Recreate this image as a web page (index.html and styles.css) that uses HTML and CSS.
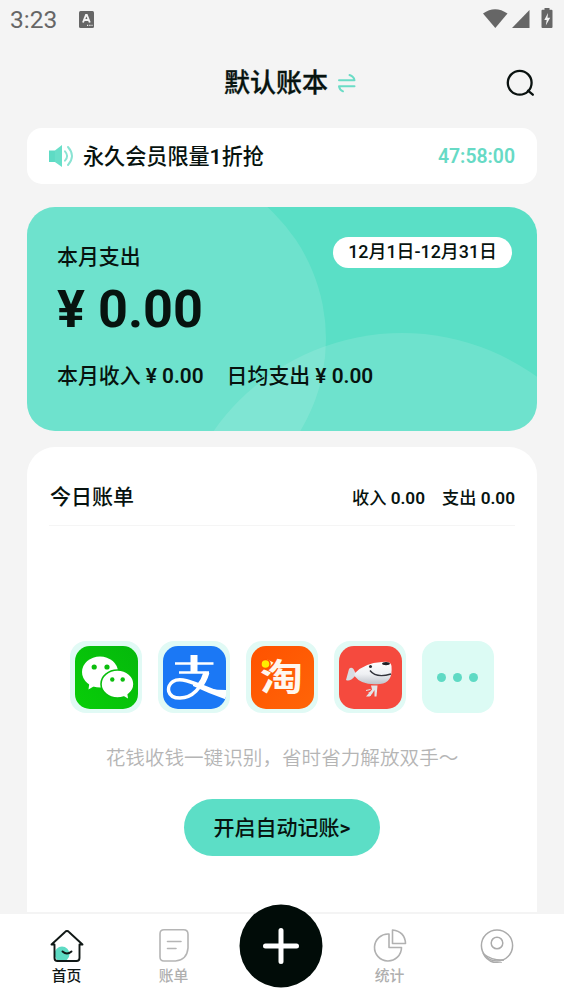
FILE: index.html
```html
<!DOCTYPE html>
<html lang="zh-CN">
<head>
<meta charset="utf-8">
<title>默认账本</title>
<link rel="stylesheet" href="styles.css">
</head>
<body>
<div class="app">
  <div class="status">
    <span class="clock">3:23</span>
    <svg class="status-badge" width="15" height="17" viewBox="0 0 15 17"><rect width="15" height="17" rx="1.5" fill="#666"/><path d="M4 11.5 7 4h.8l3 7.5M5.3 9h4.2" fill="none" stroke="#f4f4f4" stroke-width="1.9"/><path d="M8 14.4h1.2M10.3 14.4h1.2M12.5 14.4h1" stroke="#f4f4f4" stroke-width="1.3"/></svg>
    <svg class="status-icons" width="72" height="22" viewBox="0 0 72 22"><g fill="#666"><path d="M1 5.5Q13 -3 25.5 5.5L13.3 20Z"/><path d="M47.5 2V20H30Z"/><path d="M62.500 0h5v1.800h2a1 1 0 0 1 1 1V19a1 1 0 0 1-1 1h-9a1 1 0 0 1-1-1V2.800a1 1 0 0 1 1-1h2Z"/></g><path d="M66 5 62.300 12h2.400l-.9 5.500 4.400-7.700h-2.700Z" fill="#f4f4f4"/></svg>
  </div>

  <header class="header">
    <h1 class="title">默认账本</h1>
    <svg class="swap" width="20" height="22" viewBox="0 0 20 22" fill="none" stroke="#6bdcc6" stroke-width="2" stroke-linecap="round" stroke-linejoin="round"><path d="M2 8.300H17.500Q17 4.500 12.500 3"/><path d="M17.500 14.300H2Q2.500 17.700 6 19.300"/></svg>
    <svg class="search" width="30" height="30" viewBox="0 0 30 30" fill="none" stroke="#0a1210" stroke-width="2.300" stroke-linecap="round"><circle cx="14.700" cy="14.800" r="11.900"/><path d="m23 22.700 4.800 4"/></svg>
  </header>

  <section class="notice">
    <svg class="speaker" width="26" height="24" viewBox="0 0 26 24"><path d="M1 6.500h6V18H1Z" fill="#5edbc4"/><path d="M6.900 6.500 14 1v22L6.900 18Z" fill="#69dfc9"/><path d="M17 7.300q4.200 4.700 0 9.400M20 3q8 9 0 18" fill="none" stroke="#8ae3d3" stroke-width="1.900" stroke-linecap="round"/></svg>
    <span class="notice-text">永久会员限量<b>1</b>折抢</span>
    <span class="countdown">47:58:00</span>
  </section>

  <section class="summary">
    <svg class="summary-art" width="510" height="224" viewBox="0 0 510 224" fill="#fff"><circle cx="121" cy="132" r="178" fill-opacity=".12"/><circle cx="375" cy="356" r="230" fill-opacity=".12"/></svg>
    <div class="summary-top"><span>本月支出</span><span class="range">12月1日-12月31日</span></div>
    <div class="amount">¥ 0.00</div>
    <div class="summary-foot"><span>本月收入 <b>¥ 0.00</b></span><span>日均支出 <b>¥ 0.00</b></span></div>
  </section>

  <section class="today">
    <div class="today-head">
      <h2>今日账单</h2>
      <div class="totals"><span>收入 <b>0.00</b></span><span>支出 <b>0.00</b></span></div>
    </div>
    <div class="apps">
      <div class="plate"><svg class="logo" viewBox="0 0 63 63"><defs><linearGradient id="wx" x1="1" y1="0" x2="0" y2="1"><stop stop-color="#05b80c"/><stop offset="1" stop-color="#08ce08"/></linearGradient></defs><rect width="63" height="63" fill="url(#wx)"/><g fill="#fff"><path d="m14.500 36-1 7.500L21 39Z"/><ellipse cx="25" cy="26" rx="18" ry="15.500"/><ellipse cx="42.500" cy="38" rx="16.500" ry="14" stroke="#08be0b" stroke-width="1.600"/><path d="m47 49 6 3.500-1-7Z"/></g><g fill="#0bbd0d"><circle cx="19.200" cy="21" r="2.600"/><circle cx="32" cy="21" r="2.600"/><circle cx="37.300" cy="33.500" r="2.200"/><circle cx="47.700" cy="33.500" r="2.200"/></g></svg></div>
      <div class="plate"><svg class="logo" viewBox="0 0 63 63"><rect width="63" height="63" fill="#1b78f5"/><g fill="none" stroke="#fff"><path d="M31 9V27" stroke-width="7"/><path d="M12 17.500H50.500M16 26.500H46" stroke-width="2.600"/><path d="M43.500 26C39 42 29 52 17 52C3.500 52 3 40 10 35.500C20 29.500 38 41 65 50" stroke-width="3.500"/><path d="M43.500 26.500Q41 35 36 41" stroke-width="6"/></g><path d="M30 38.500Q47 44 63 44V53.500Q47 48 30 40Z" fill="#fff"/></svg></div>
      <div class="plate"><svg class="logo" viewBox="0 0 63 63"><defs><linearGradient id="tb" x2="1" y2="1"><stop stop-color="#ff5200"/><stop offset="1" stop-color="#ff6508"/></linearGradient></defs><rect width="63" height="63" fill="url(#tb)"/><text class="tao" transform="translate(9 45) scale(1.16 1)">淘</text><circle cx="14.500" cy="18" r="5.300" fill="#ff5200"/><circle cx="14.500" cy="18" r="3.800" fill="#ffec00"/></svg></div>
      <div class="plate"><svg class="logo" viewBox="0 0 63 63"><defs><linearGradient id="jd" x2="0" y2="1"><stop stop-color="#fff"/><stop offset=".55" stop-color="#eef0f3"/><stop offset="1" stop-color="#bfc3ca"/></linearGradient></defs><rect width="63" height="63" fill="#f54a3e"/><path d="M17 28 14.500 23Q12 20.500 10 23L7 34Q11 36 16 30Z" fill="#d9dce1"/><path d="M15.500 27.500Q25 17 43 16Q52 14.500 52.500 20Q54 37 41 38Q23 40 15.500 30Z" fill="url(#jd)"/><path d="M32 39.500h6.500l-1 11h-2V44l-2.500 4-2.500 2.500H27l6-7Z" fill="#e3e5e8"/><path d="M31.500 43.500 27 44.500M30 46l1.500 4" stroke="#e3e5e8"/><circle cx="31.500" cy="20.500" r="1.500" fill="#292b32"/><ellipse cx="47" cy="17.600" rx="3.900" ry="1.700" fill="#202126"/><path d="M31 24.500Q37 32.500 52 28" fill="none" stroke="#32343b" stroke-width="1.400"/></svg></div>
      <div class="plate more"><i></i><i></i><i></i></div>
    </div>
    <p class="hint">花钱收钱一键识别，省时省力解放双手～</p>
    <button class="start">开启自动记账<b>&gt;</b></button>
  </section>

  <nav class="tabs">
    <div class="tab active"><svg width="36" height="36" viewBox="0 0 36 36" fill="none" stroke="#101816" stroke-width="1.900" stroke-linecap="round" stroke-linejoin="round"><circle cx="13" cy="27" r="7.500" fill="#5edbc4" stroke="none"/><path d="M5.500 17.500H2.500L15.800 5.200Q18 3 20.200 5.200L33.500 17.500H30.500V31Q30.500 34 27.500 34H8.500Q5.500 34 5.500 31Z"/><path d="M13.500 24.500Q18 28.500 22.500 24.500"/></svg><span>首页</span></div>
    <div class="tab"><svg width="36" height="36" viewBox="0 0 36 36" fill="none" stroke="#b5b5b5" stroke-width="1.600" stroke-linecap="round"><path d="M8 2.800H27.500Q32 2.800 32 7.300V21Q31 33 19.500 34H8Q4 34 4 30V6.800Q4 2.800 8 2.800Z"/><path d="M11.500 14.500H25M11.500 21.500H20"/></svg><span>账单</span></div>
    <div class="tab fab"><svg width="84" height="84" viewBox="0 0 84 84"><circle cx="42" cy="42" r="41.500" fill="#010c08"/><path d="M42 26.500V57.500M26.500 42H57.500" stroke="#fff" stroke-width="5" stroke-linecap="round"/></svg></div>
    <div class="tab"><svg width="36" height="36" viewBox="0 0 36 36" fill="none" stroke="#b1b1b1" stroke-width="1.600" stroke-linejoin="round"><path d="M17 7A13.500 13.500 0 1 0 29.500 20.500H17Z"/><path d="M20.500 3.500V16.500H33.500Q33 4.500 20.500 3Z"/></svg><span>统计</span></div>
    <div class="tab"><svg width="36" height="36" viewBox="0 0 36 36" fill="none" stroke="#ababab" stroke-width="1.500"><circle cx="18" cy="18.500" r="15.600"/><circle cx="18" cy="16" r="5.800"/><path d="M4.500 27Q14 34 25 33M4 26Q9 37 23 36"/></svg><span></span></div>
  </nav>
</div>
</body>
</html>
```
FILE: styles.css
```css
* { box-sizing: border-box; }
body {
  margin: 0;
  background: #f4f4f4;
  color: #07130f;
  font-family: Roboto, "Noto Sans CJK SC", sans-serif;
  font-weight: 500;
}
svg { display: block; flex: none; }
h1, h2, p { margin: 0; font-weight: 500; }
b { font-weight: 600; }
.app { display: flex; flex-direction: column; width: 564px; height: 1004px; overflow: hidden; }
.status { display: flex; align-items: center; height: 38px; padding: 0 10px; }
.clock { width: 69px; font-size: 24.5px; font-weight: 400; color: #666; }
.status-icons { margin-left: auto; margin-top: -1px; }
.header { display: flex; align-items: center; height: 90px; padding: 0 29px 0 224px; }
.title { font-size: 26px; line-height: 36px; -webkit-text-stroke: 0.3px currentColor; }
.swap { margin-left: 9px; }
.search { margin-left: auto; }
.notice {
  display: flex; align-items: center; flex: none;
  height: 56px; margin: 0 27px 23px; padding: 0 22px 0 21px;
  border-radius: 15px; background: #fff;
}
.notice-text { margin: -2px 0 0 9px; font-size: 21.1px; }
.countdown { margin-left: auto; padding-top: 1px; font-size: 19.4px; font-weight: 600; color: #67dac5; }
.summary {
  position: relative; flex: none; height: 224px; margin: 0 27px 16px;
  padding: 30px 25px 0 30px; border-radius: 28px; overflow: hidden; background: #5adfc6; font-size: 20.9px;
}
.summary-art { position: absolute; left: 0; top: 0; }
.summary > div { position: relative; }
.summary-top { display: flex; justify-content: space-between; height: 40px; line-height: 40px; }
.range { height: 31px; padding: 0 15px; border-radius: 16px; background: #fff; font-size: 17.9px; line-height: 30px; }
.amount { height: 66px; line-height: 66px; font-size: 52.2px; font-weight: 700; }
.summary-foot { display: flex; gap: 23px; height: 64px; line-height: 66px; }
.summary-foot b { font-size: 20.8px; }
.today {
  display: flex; flex-direction: column; align-items: center; flex: none;
  height: 465px; margin: 0 27px; border-radius: 28px 28px 0 0; background: #fff;
}
.today-head {
  display: flex; align-items: center; justify-content: space-between; align-self: stretch;
  height: 79px; margin: 0 22px; padding: 17px 0 0 1px; border-bottom: 1px solid #f5f5f5;
}
.today-head h2 { font-size: 21px; }
.totals { display: flex; gap: 17px; font-size: 17.2px; margin: 4px 0 0; }
.apps { display: flex; gap: 16px; margin: 115px 0 0; }
.plate { display: flex; align-items: center; justify-content: center; width: 72px; height: 72px; border-radius: 16px; background: #e1faf5; }
.logo { width: 63px; height: 63px; border-radius: 15px; }
.tao { font: 700 37px/1 "Noto Sans CJK SC", sans-serif; fill: #fff7ee; }
.more { gap: 7px; padding-right: 1px; background: #dcfbf4; }
.more i { width: 9px; height: 9px; border-radius: 50%; background: #5fdac4; }
.hint { margin-top: 31px; font-size: 19.6px; line-height: 30px; font-weight: 350; color: #b5b5b5; white-space: nowrap; }
.start {
  width: 196px; height: 57px; margin-top: 25px; padding: 0 0 3px; border: 0; border-radius: 29px;
  background: #5cdec6; color: #07130f; font: inherit; font-size: 21px;
}
.tabs { display: flex; flex: none; height: 92px; padding: 13px 14px 0 13px; border-top: 2px solid #f4f4f4; background: #fff; }
.tab { display: flex; flex: 1; flex-direction: column; align-items: center; font-size: 14.8px; line-height: 22px; color: #afafaf; }
.tab span { margin-top: 2px; }
.active { color: #101816; }
.fab { margin-top: -23px; padding-right: 2px; }
```
